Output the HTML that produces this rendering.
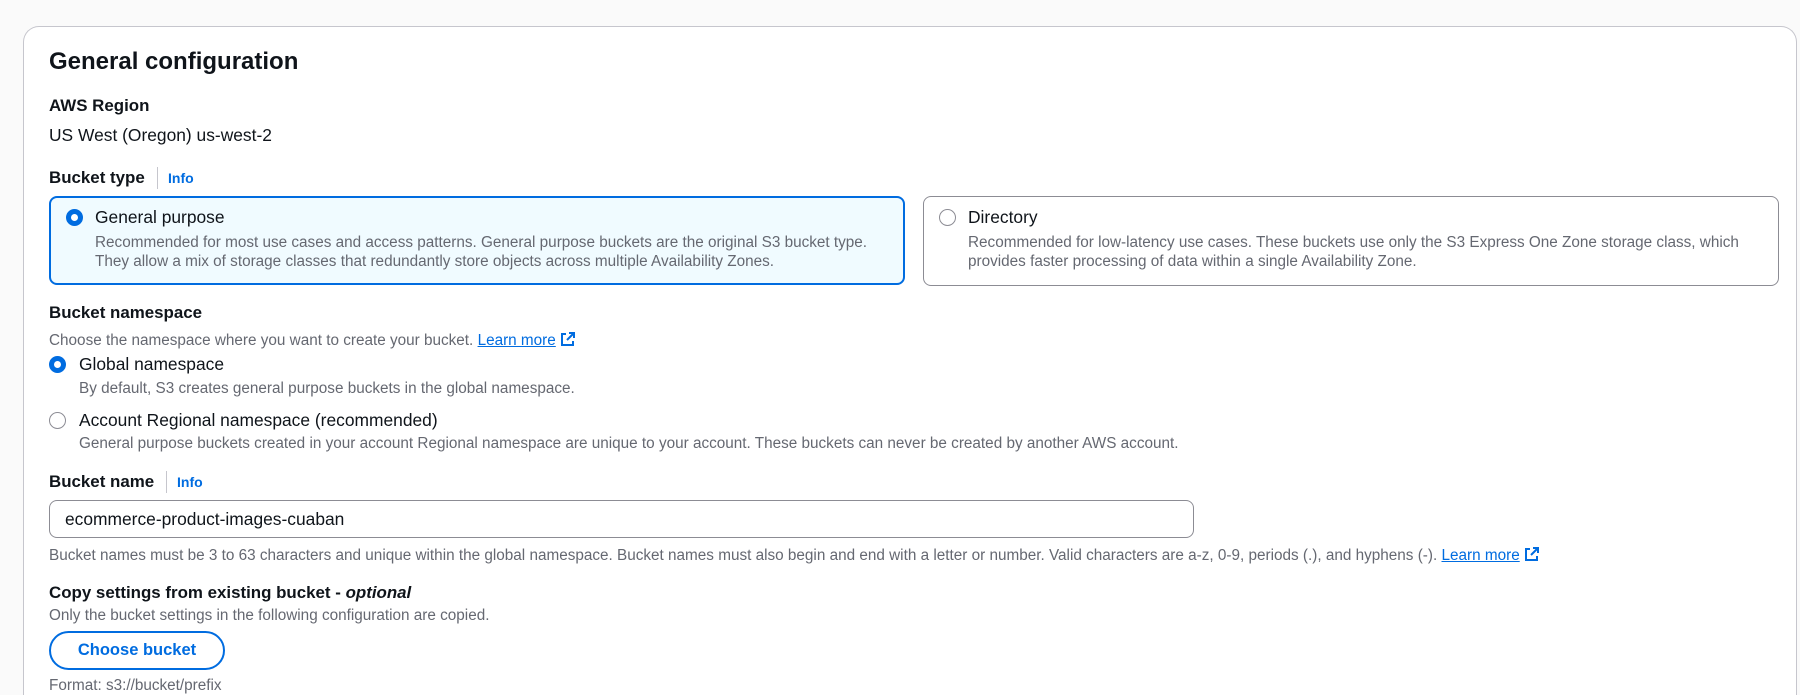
<!DOCTYPE html>
<html style="width:1800px;height:695px;overflow:hidden"><head><meta charset="utf-8"><style>
*{box-sizing:border-box;margin:0;padding:0}
body{width:1800px;height:695px;overflow:hidden;background:#fafafa;font-family:"Liberation Sans",sans-serif;color:#0f141a;position:relative}
.a{position:absolute;white-space:nowrap}
.panel{position:absolute;left:23px;top:26px;width:1774px;height:700px;background:#fff;border:1px solid #c6c6cd;border-bottom:none;border-radius:16px 16px 0 0}
.h{font-weight:bold;font-size:16.9px}
.t{font-size:17.4px}
.d{font-size:15.3px;color:#656871}
.info{color:#006ce0;font-weight:bold;font-size:14px}
.sep{position:absolute;width:1px;height:22px;background:#c6c6cd}
.tile{position:absolute;border-radius:8px}
.r{position:absolute;width:17px;height:17px;border-radius:50%;border:1.5px solid #8c8c94;background:#fff}
.r.on{border:5px solid #006ce0}
a{color:#006ce0;text-decoration:underline}
</style></head><body>
<div class="panel"></div>
<div class="a" style="left:49px;top:48px;font-size:24px;font-weight:bold">General configuration</div>
<div class="a h" style="left:49px;top:96px">AWS Region</div>
<div class="a t" style="left:49px;top:125px">US West (Oregon) us-west-2</div>
<div class="a h" style="left:49px;top:168px">Bucket type</div>
<div class="sep" style="left:157px;top:167px"></div>
<div class="a info" style="left:168px;top:170px">Info</div>

<div class="tile" style="left:49px;top:196px;width:856px;height:89px;background:#f0fbff;border:2px solid #006ce0"></div>
<div class="r on" style="left:66px;top:209px"></div>
<div class="a t" style="left:95px;top:207px">General purpose</div>
<div class="a d" style="left:95px;top:234px">Recommended for most use cases and access patterns. General purpose buckets are the original S3 bucket type.</div>
<div class="a d" style="left:95px;top:253px">They allow a mix of storage classes that redundantly store objects across multiple Availability Zones.</div>

<div class="tile" style="left:923px;top:196px;width:856px;height:90px;border:1px solid #8c8c94"></div>
<div class="r" style="left:939px;top:209px"></div>
<div class="a t" style="left:968px;top:207px">Directory</div>
<div class="a d" style="left:968px;top:234px">Recommended for low-latency use cases. These buckets use only the S3 Express One Zone storage class, which</div>
<div class="a d" style="left:968px;top:253px">provides faster processing of data within a single Availability Zone.</div>

<div class="a h" style="left:49px;top:303px">Bucket namespace</div>
<div class="a d" style="left:49px;top:331px">Choose the namespace where you want to create your bucket. <a>Learn more</a> <svg width="16" height="16" viewBox="0 0 16 16" style="vertical-align:-2px"><path d="M9 2h5v5M14 2L7 9M6 3H2v11h11v-4" fill="none" stroke="#006ce0" stroke-width="2"/></svg></div>
<div class="r on" style="left:49px;top:356px"></div>
<div class="a t" style="left:79px;top:354px">Global namespace</div>
<div class="a d" style="left:79px;top:380px">By default, S3 creates general purpose buckets in the global namespace.</div>
<div class="r" style="left:49px;top:412px"></div>
<div class="a t" style="left:79px;top:410px">Account Regional namespace (recommended)</div>
<div class="a d" style="left:79px;top:435px">General purpose buckets created in your account Regional namespace are unique to your account. These buckets can never be created by another AWS account.</div>

<div class="a h" style="left:49px;top:472px">Bucket name</div>
<div class="sep" style="left:166px;top:471px"></div>
<div class="a info" style="left:177px;top:474px">Info</div>
<div style="position:absolute;left:49px;top:500px;width:1145px;height:38px;border:1px solid #8c8c94;border-radius:8px"></div>
<div class="a t" style="left:65px;top:509px">ecommerce-product-images-cuaban</div>
<div class="a d" style="left:49px;top:546px">Bucket names must be 3 to 63 characters and unique within the global namespace. Bucket names must also begin and end with a letter or number. Valid characters are a-z, 0-9, periods (.), and hyphens (-). <a>Learn more</a> <svg width="16" height="16" viewBox="0 0 16 16" style="vertical-align:-2px"><path d="M9 2h5v5M14 2L7 9M6 3H2v11h11v-4" fill="none" stroke="#006ce0" stroke-width="2"/></svg></div>
<div class="a h" style="left:49px;top:583px">Copy settings from existing bucket - <i>optional</i></div>
<div class="a d" style="left:49px;top:607px">Only the bucket settings in the following configuration are copied.</div>
<div style="position:absolute;left:49px;top:631px;width:176px;height:39px;border:2px solid #006ce0;border-radius:20px;color:#006ce0;font-weight:bold;font-size:16.5px;text-align:center;line-height:35px">Choose bucket</div>
<div class="a d" style="left:49px;top:677px">Format: s3://bucket/prefix</div>
</body></html>
